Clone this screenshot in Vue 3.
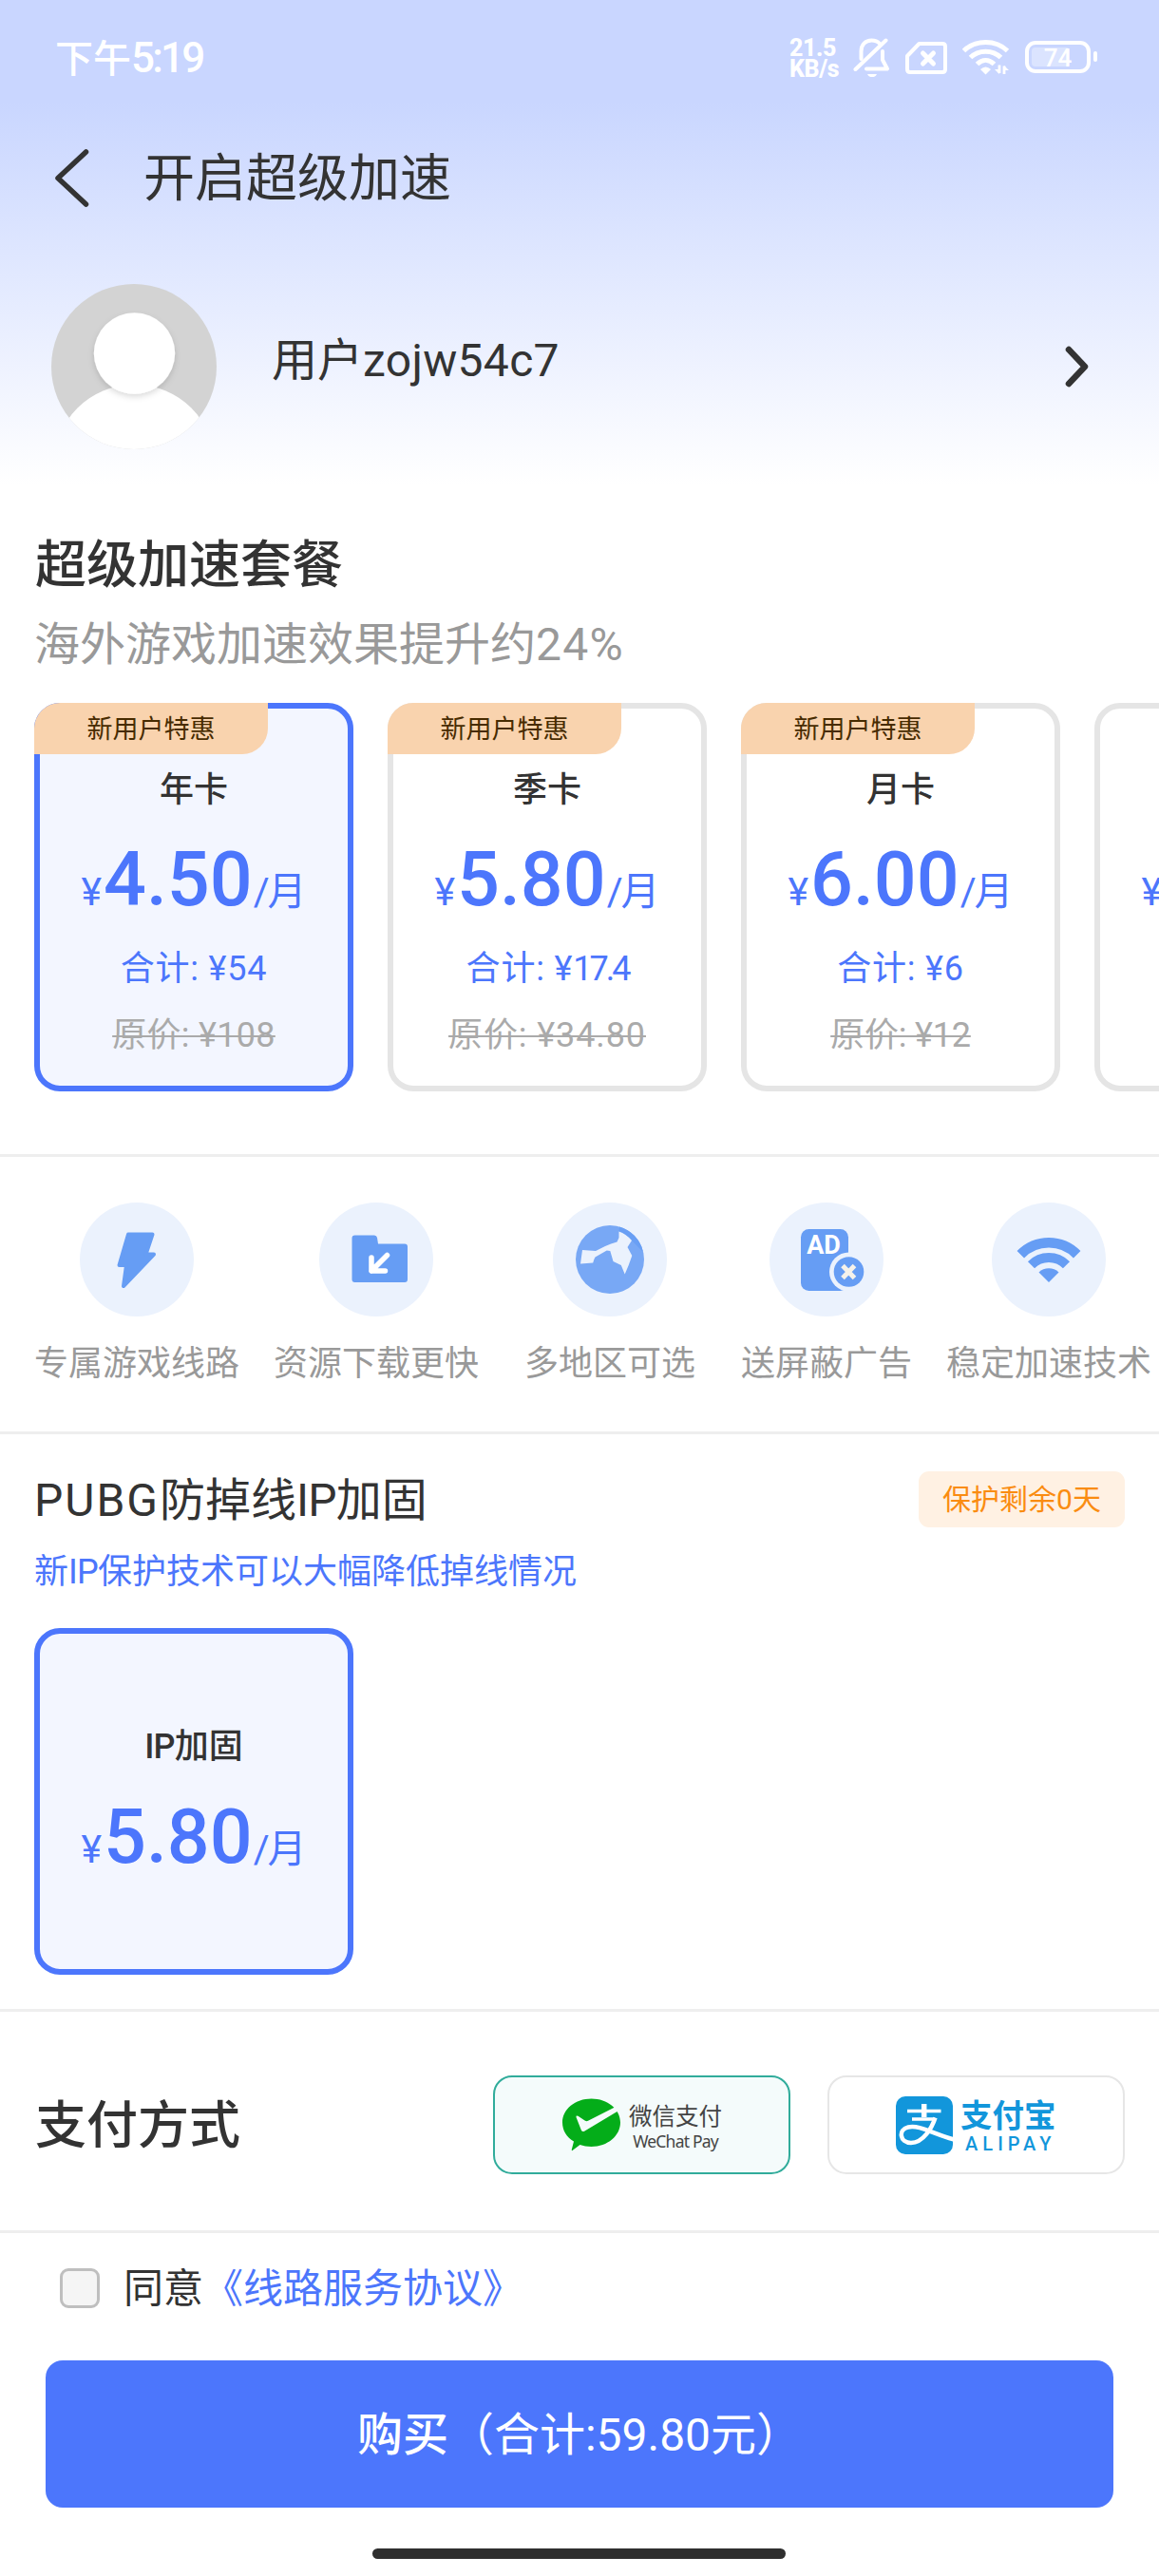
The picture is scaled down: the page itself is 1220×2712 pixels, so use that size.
<script setup>
const plans = [
  { id: 'year', name: '年卡', price: '4.50', total: '54', original: '108', active: true },
  { id: 'season', name: '季卡', price: '5.80', total: '17.4', original: '34.80' },
  { id: 'month', name: '月卡', price: '6.00', total: '6', original: '12' },
  { id: 'week', name: '', price: '7.00', total: '', original: '', plain: true },
]
</script>

<template>
  <div class="page">
    <header class="hero">
      <div class="status">
        <div class="clock">下午<span class="clock-num">5:19</span></div>
        <div class="status-right">
          <div class="net"><span>21.5</span><span>KB/s</span></div>
          <svg class="bell" width="40" height="42" viewBox="0 0 40 42" fill="none" stroke="#fff" stroke-width="4" stroke-linecap="round" stroke-linejoin="round">
            <path d="M8.500 22V14C8.500 7 13 2.500 19.500 2.500C23 2.500 26 3.800 28 6" />
            <path d="M31 14V23L36 32.500H14" />
            <path d="M2.500 33L34.500 2.500" />
            <path d="M15 38H25C24 40.500 22 41 20 41C18 41 16 40.500 15 38Z" fill="#fff" stroke="none" />
          </svg>
          <svg class="sim" width="44" height="34" viewBox="0 0 44 34" fill="none" stroke="#fff" stroke-width="4" stroke-linejoin="round">
            <path d="M14.500 2H39Q42 2 42 5V29Q42 32 39 32H5Q2 32 2 29V15Z" />
            <path d="M18.500 12L29.500 23M29.500 12L18.500 23" stroke-width="5" stroke-linecap="round" />
          </svg>
          <svg class="wifi" width="50" height="38" viewBox="0 0 50 38" fill="none" stroke="#fff" stroke-width="5">
            <path d="M1.500 12.500C14 0.500 35 0.500 47.500 12.500" />
            <path d="M8.500 19.500C17 11 32 11 40.500 19.500" />
            <path d="M15.500 26.500C21 21 28 21 33.500 26.500" />
            <path d="M19 32Q24.500 27 30 32L24.500 37.500Z" fill="#fff" stroke="none" />
            <path d="M39 27.500V36M44 37V28.500" stroke-width="2.800" />
            <path d="M34 32H39V37ZM49 33H44V28Z" fill="#fff" stroke="none" />
          </svg>
          <div class="battery"><i class="battery-fill"></i><b>74</b></div>
          <i class="battery-nub"></i>
        </div>
      </div>

      <div class="nav">
        <svg width="40" height="64" viewBox="0 0 40 64" fill="none" stroke="#333" stroke-width="5.500" stroke-linecap="round" stroke-linejoin="round">
          <path d="M33.500 5L4 32.500L33.500 60" />
        </svg>
        <h1>开启超级加速</h1>
      </div>

      <div class="profile">
        <svg class="avatar" width="174" height="174" viewBox="0 0 174 174">
          <defs>
            <clipPath id="face"><circle cx="87" cy="87" r="87" /></clipPath>
            <filter id="soft" x="-30%" y="-30%" width="160%" height="160%">
              <feDropShadow dx="0" dy="3" stdDeviation="3" flood-color="#000" flood-opacity=".14" />
            </filter>
          </defs>
          <g clip-path="url(#face)">
            <rect width="174" height="174" fill="#d3d3d3" />
            <circle cx="87.500" cy="190.500" r="84.700" fill="#fff" />
            <circle cx="87.500" cy="73" r="42.700" fill="#fff" filter="url(#soft)" />
          </g>
        </svg>
        <div class="username">用户<span>zojw54c7</span></div>
        <svg class="go" width="34" height="50" viewBox="0 0 34 50" fill="none" stroke="#333" stroke-width="6.500" stroke-linecap="round" stroke-linejoin="round">
          <path d="M8 7L25 25L8 43" />
        </svg>
      </div>
    </header>

    <section class="plans">
      <h2>超级加速套餐</h2>
      <p class="lead">海外游戏加速效果提升约<span>24%</span></p>
      <div class="cards">
        <article v-for="p in plans" :key="p.id" class="card" :class="[p.id, { active: p.active }]">
          <span v-if="!p.plain" class="ribbon">新用户特惠</span>
          <div class="name">{{ p.name }}</div>
          <div class="price"><small>¥</small><b>{{ p.price }}</b><small class="per"><i>/</i>月</small></div>
          <template v-if="!p.plain">
            <div class="total">合计: ¥<span class="num">{{ p.total }}</span></div>
            <div class="original">原价: ¥{{ p.original }}</div>
          </template>
        </article>
      </div>
    </section>

    <section class="features">
      <div class="feature">
        <svg width="120" height="120" viewBox="0 0 120 120">
          <circle cx="60" cy="60" r="60" fill="#ebf2fd" />
          <path d="M51 33.500H76.500L69.500 54.500H78L46 88L49 66H41.500Z" fill="#669df4" stroke="#669df4" stroke-width="4" stroke-linejoin="round" />
        </svg>
        <span>专属游戏线路</span>
      </div>
      <div class="feature">
        <svg width="120" height="120" viewBox="0 0 120 120">
          <circle cx="60" cy="60" r="60" fill="#ebf2fd" />
          <path d="M37.500 34.500H58Q60.500 34.500 61 37L62 43.500H90Q93 43.500 93 46.500V81Q93 84 90 84H37.500Q34.500 84 34.500 81V37.500Q34.500 34.500 37.500 34.500Z" fill="#669df4" />
          <path d="M71.500 55.500L55 72M55 58V72H69.500" fill="none" stroke="#fff" stroke-width="5.500" stroke-linecap="round" stroke-linejoin="round" />
        </svg>
        <span>资源下载更快</span>
      </div>
      <div class="feature">
        <svg width="120" height="120" viewBox="0 0 120 120">
          <circle cx="60" cy="60" r="60" fill="#ebf2fd" />
          <circle cx="60" cy="60" r="36" fill="#78a8f5" />
          <path d="M70 25.500A36 36 0 0 1 95 52L83 40L69.500 30.500Z" fill="#699ff4" />
          <path d="M31 50L45 51L55 46Q61 43 67.500 41.500L69.500 37V30.500Q77 33 83 40L78.500 47L83.300 56Q80 66 75.700 75.500L71.800 66L63.500 62L60.300 51L56.700 50.500L44.500 57.500Q43 60 42.200 63.500L29 64.500Z" fill="#ebf2fd" />
        </svg>
        <span>多地区可选</span>
      </div>
      <div class="feature">
        <svg width="120" height="120" viewBox="0 0 120 120">
          <circle cx="60" cy="60" r="60" fill="#ebf2fd" />
          <rect x="33" y="28" width="50" height="65" rx="8.500" fill="#669df4" />
          <circle cx="83.500" cy="73" r="20.500" fill="#ebf2fd" />
          <circle cx="83.500" cy="73" r="15.800" fill="#669df4" />
          <path d="M77 66.500L89.500 79.500M89.500 66.500L77 79.500" stroke="#f6f2ea" stroke-width="5" />
          <text x="57" y="54" class="ad">AD</text>
        </svg>
        <span>送屏蔽广告</span>
      </div>
      <div class="feature">
        <svg width="120" height="120" viewBox="0 0 120 120">
          <circle cx="60" cy="60" r="60" fill="#ebf2fd" />
          <g fill="none" stroke="#669df4">
            <path d="M30.300 54.800A41.600 41.600 0 0 1 89.700 54.800" stroke-width="10.500" />
            <path d="M41.500 65.800A26 26 0 0 1 78.500 65.800" stroke-width="10" />
          </g>
          <path d="M49.500 73.500A15.300 15.300 0 0 1 70.500 73.500L60 84Z" fill="#669df4" />
        </svg>
        <span>稳定加速技术</span>
      </div>
    </section>

    <section class="guard">
      <div class="guard-head">
        <h3><span class="wide">PUBG</span>防掉线<span class="snug">IP</span>加固</h3>
        <span class="left">保护剩余0天</span>
      </div>
      <p>新<span class="snug">IP</span>保护技术可以大幅降低掉线情况</p>
      <article class="card active ip">
        <div class="name"><span class="snug">IP</span>加固</div>
        <div class="price"><small>¥</small><b>5.80</b><small class="per"><i>/</i>月</small></div>
      </article>
    </section>

    <section class="pay">
      <h2>支付方式</h2>
      <div class="method wechat">
        <svg width="62" height="56" viewBox="0 0 62 56">
          <path d="M30.500 0.500C47.500 0.500 61 11.500 61 25.500S47.500 51 30.500 51C26 51 22 50.300 18.500 49L10.500 55Q9.500 55.500 9.800 54L12 45.500C4.500 41 0 34 0 25.500C0 11.500 13.500 0.500 30.500 0.500Z" fill="#04ad19" />
          <path d="M14.500 20Q14 18 16.500 18.800L24 23.700Q25.500 24.500 27 23.800L55.500 9.200L58.500 13.500L23.500 34.500Q21 36 19.800 33.500Z" fill="#f4fbfb" />
        </svg>
        <div class="brand"><span class="cn">微信支付</span><span class="en">WeChat Pay</span></div>
      </div>
      <div class="method alipay">
        <svg width="60" height="61" viewBox="0 0 60 61">
          <rect width="60" height="61" rx="10" fill="#1296db" />
          <g fill="none" stroke="#fff" stroke-width="4.500">
            <path d="M29.700 8V22" stroke-width="5.500" />
            <path d="M12 15.500H47.500M17 24H41" stroke-width="3.500" />
            <path d="M41.500 22.500C38 33 29 49 16 49C4 49 2 35 13 32.500C25 30 38 39 61 45.500" />
          </g>
        </svg>
        <div class="brand"><span class="cn">支付宝</span><span class="en">ALIPAY</span></div>
      </div>
    </section>

    <footer class="bottom">
      <div class="agree"><i class="box"></i><span>同意<a>《线路服务协议》</a></span></div>
      <button type="button"><b>购买</b>（合计:59.80元）</button>
      <i class="home"></i>
    </footer>
  </div>
</template>

<style>
html, body { background: #fff; overflow: hidden; }
</style>

<style scoped>
* { box-sizing: border-box; margin: 0; padding: 0; }
.page {
  width: 1220px; height: 2712px; overflow: hidden; background: #fff; color: #333;
  font-family: Roboto, "Noto Sans CJK SC", sans-serif; display: flex; flex-direction: column;
}
svg { display: block; flex: none; }
i, a { font-style: normal; }
h1, h3 { font-weight: 400; }
h2 { font-weight: 500; font-size: 54px; line-height: 64px; padding-left: 1px; }
.snug { letter-spacing: -.8px; }
.wide { letter-spacing: 2px; }

.hero { height: 516px; flex: none; background: linear-gradient(#c9d6ff 0, #c9d6ff 108px, #fff 510px); }
.status { height: 118px; display: flex; justify-content: space-between; padding: 0 65px 0 58px; color: #fff; }
.clock { padding-top: 36px; font-size: 40px; line-height: 50px; font-weight: 500; }
.clock-num { font-size: 44px; letter-spacing: -2.800px; }
.status-right { display: flex; align-items: flex-start; }
.net { display: flex; flex-direction: column; width: 67px; padding-top: 40px; font-size: 25px; line-height: 22px; font-weight: 800; letter-spacing: -.4px; }
.bell { margin-top: 40px; }
.sim { margin: 44px 0 0 15px; }
.wifi { margin: 41px 0 0 16px; }
.battery { position: relative; width: 69px; height: 34px; margin: 43px 0 0 16px; border: 4px solid #fff; border-radius: 11px; text-align: center; line-height: 28px; font-size: 26px; }
.battery b { position: relative; font-weight: 500; }
.battery-fill { position: absolute; left: 3px; top: 3px; width: 40px; height: 20px; border-radius: 4px; background: #dbe4ff; }
.battery-nub { width: 4px; height: 11px; margin: 54px 0 0 3px; border-radius: 2px; background: #fff; }

.nav { height: 138px; display: flex; align-items: center; padding-left: 57px; }
.nav h1 { margin: 4px 0 0 54px; font-size: 54px; line-height: 64px; }
.profile { height: 260px; display: flex; align-items: center; padding: 0 69px 0 54px; }
.username { margin: -12px 0 0 58px; font-size: 48px; line-height: 60px; flex: 1; }
.username span { letter-spacing: .3px; }

.plans { height: 702px; flex: none; padding: 48px 0 0 36px; border-bottom: 3px solid #eee; }
.lead { margin-top: 21px; font-size: 48px; line-height: 60px; color: #999; }
.lead span { letter-spacing: 1.300px; }
.cards { display: flex; gap: 36px; margin-top: 31px; overflow: hidden; }
.card { position: relative; flex: none; width: 336px; height: 409px; border: 6px solid #e5e5e5; border-radius: 27px; text-align: center; padding-top: 63px; }
.card.active { border-color: #4c76fc; background: #f3f6ff; }
.ribbon { position: absolute; left: -6px; top: -6px; width: 246px; height: 54px; background: #f9d3ae; color: #472b00; border-radius: 27px 0 27px 0; font-size: 27px; line-height: 56px; }
.name { height: 46px; font-size: 36px; line-height: 46px; font-weight: 500; }
.price { display: flex; justify-content: center; align-items: baseline; height: 90px; margin-top: 26px; line-height: 90px; color: #4c76fc; white-space: nowrap; }
.price b { font-size: 79px; font-weight: 500; margin-left: 2px; }
.price small { font-size: 41px; }
.per i { margin: 0 -2px 0 1px; }
.total { margin-top: 26px; height: 46px; font-size: 36px; line-height: 46px; color: #4c76fc; letter-spacing: .8px; }
.season .num { letter-spacing: -3px; }
.original { margin-top: 24px; height: 46px; font-size: 36px; line-height: 46px; color: #aaa; letter-spacing: .3px; text-decoration: line-through; text-decoration-thickness: 2px; }
.season .original { letter-spacing: .9px; }
.month .original { letter-spacing: -.2px; }

.features { display: flex; height: 292px; flex: none; padding: 48px 0 0 36px; border-bottom: 3px solid #eee; }
.feature { display: flex; flex-direction: column; align-items: center; margin-right: 36px; font-size: 36px; line-height: 46px; color: #999; white-space: nowrap; flex: none; }
.feature:nth-child(3) { margin: 0 48px 0 12px; }
.feature span { margin-top: 27px; }
.ad { font-size: 27px; font-weight: 700; fill: #fff; text-anchor: middle; }

.guard { height: 608px; flex: none; padding: 38px 36px 0; border-bottom: 3px solid #eee; }
.guard-head { display: flex; justify-content: space-between; align-items: center; height: 60px; }
.guard h3 { font-size: 48px; line-height: 60px; padding-top: 3px; }
.left { width: 217px; height: 59px; border-radius: 11px; background: #fff1e3; color: #fa8c11; font-size: 30px; line-height: 60px; text-align: center; }
.guard p { margin-top: 24px; font-size: 36px; line-height: 46px; color: #4c76fc; }
.card.ip { height: 365px; margin-top: 36px; padding-top: 96px; }
.ip .price { margin-top: 27px; }

.pay { display: flex; align-items: center; height: 233px; flex: none; padding: 8px 36px 0; border-bottom: 3px solid #eee; }
.pay h2 { flex: 1; padding-top: 4px; }
.method { width: 313px; height: 104px; display: flex; justify-content: flex-start; align-items: center; border: 2px solid #e6e6e6; border-radius: 20px; padding-left: 71px; }
.wechat { border-color: #31ac9b; background: #f4fbfb; margin-right: 39px; }
.alipay { padding-left: 70px; }
.brand { display: flex; flex-direction: column; align-items: center; margin-left: 8px; }
.wechat .brand { padding-top: 6px; }
.alipay .brand { padding-top: 3px; }
.wechat .cn { font-size: 24.500px; line-height: 28px; color: #444; }
.wechat .en { font-family: "Noto Sans", sans-serif; font-size: 17.500px; line-height: 22px; letter-spacing: -.8px; color: #444; }
.alipay .cn { font-size: 33.500px; line-height: 36px; font-weight: 700; color: #1296db; }
.alipay .en { font-size: 20px; line-height: 22px; font-weight: 500; letter-spacing: 5px; margin-right: -5px; color: #1296db; }

.bottom { display: flex; flex-direction: column; flex: 1; }
.agree { display: flex; align-items: center; height: 56px; margin: 30px 0 0 63px; font-size: 42px; line-height: 56px; }
.agree span { padding-top: 2px; }
.box { width: 42px; height: 42px; margin-right: 25px; border: 3px solid #bfbfbf; border-radius: 9px; background: #f5f5f5; }
.agree a { color: #4c76fc; }
button { width: 1124px; height: 155px; margin: 48px 0 0 48px; padding-top: 2px; border: 0; border-radius: 18px; background: #4c76fc; color: #fff; font-family: inherit; font-size: 48px; line-height: 60px; }
button b { font-weight: 500; }
.home { width: 435px; height: 11px; margin: 43px 0 0 392px; border-radius: 6px; background: #2f2f2f; }
</style>
